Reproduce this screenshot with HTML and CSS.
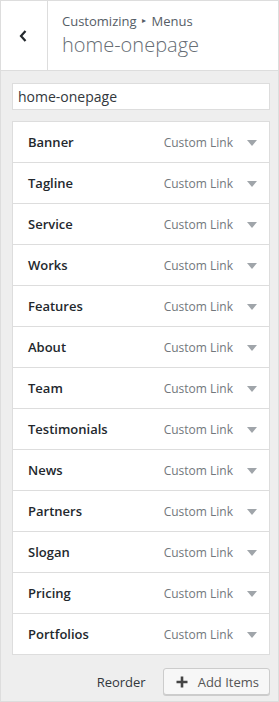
FILE: index.html
```html
<!DOCTYPE html>
<html lang="en">
<head>
  <meta charset="UTF-8">
  <title>Menus</title>
  <link rel="stylesheet" href="styles.css">
</head>
<body>
  <div class="panel">
    <!-- Header -->
    <div class="panel-head">
      <button class="back-btn" aria-label="Back">
        <svg width="10" height="14" viewBox="0 0 10 14"><path d="M7.5 2 L3 7 L7.5 12" fill="none" stroke="#23282d" stroke-width="2.2"/></svg>
      </button>
      <div class="head-title">
        <div class="crumb">Customizing<span class="sep">&#9656;</span>Menus</div>
        <div class="menu-name">home-onepage</div>
      </div>
    </div>

    <div class="panel-body">
      <input class="name-input" type="text" value="home-onepage">

      <ul class="menu-list">
        <li class="menu-item"><span class="item-title">Banner</span><span class="item-type">Custom Link</span><span class="arrow"></span></li>
        <li class="menu-item"><span class="item-title">Tagline</span><span class="item-type">Custom Link</span><span class="arrow"></span></li>
        <li class="menu-item"><span class="item-title">Service</span><span class="item-type">Custom Link</span><span class="arrow"></span></li>
        <li class="menu-item"><span class="item-title">Works</span><span class="item-type">Custom Link</span><span class="arrow"></span></li>
        <li class="menu-item"><span class="item-title">Features</span><span class="item-type">Custom Link</span><span class="arrow"></span></li>
        <li class="menu-item"><span class="item-title">About</span><span class="item-type">Custom Link</span><span class="arrow"></span></li>
        <li class="menu-item"><span class="item-title">Team</span><span class="item-type">Custom Link</span><span class="arrow"></span></li>
        <li class="menu-item"><span class="item-title">Testimonials</span><span class="item-type">Custom Link</span><span class="arrow"></span></li>
        <li class="menu-item"><span class="item-title">News</span><span class="item-type">Custom Link</span><span class="arrow"></span></li>
        <li class="menu-item"><span class="item-title">Partners</span><span class="item-type">Custom Link</span><span class="arrow"></span></li>
        <li class="menu-item"><span class="item-title">Slogan</span><span class="item-type">Custom Link</span><span class="arrow"></span></li>
        <li class="menu-item"><span class="item-title">Pricing</span><span class="item-type">Custom Link</span><span class="arrow"></span></li>
        <li class="menu-item"><span class="item-title">Portfolios</span><span class="item-type">Custom Link</span><span class="arrow"></span></li>
      </ul>

      <div class="actions">
        <span class="reorder">Reorder</span>
        <button class="add-btn">
          <svg width="12" height="12" viewBox="0 0 12 12"><path d="M6 0.5 V11.5 M0.5 6 H11.5" stroke="#444" stroke-width="2.6"/></svg>
          Add Items
        </button>
      </div>
    </div>
  </div>
</body>
</html>
```

FILE: styles.css
```css
/* Base styles */
*, ::before, ::after {
  box-sizing: border-box;
  margin: 0;
  padding: 0;
}
body {
  background-color: #eeeeee;
  color: #555d66;
  font-family: 'Open Sans', 'Noto Sans', sans-serif;
  -webkit-font-smoothing: antialiased;
}
/* Panel */
.panel {
  width: 279px;
  height: 702px;
  border: 1px solid #dddddd;
  background-color: #eeeeee;
}
.panel-head {
  display: flex;
  height: 70px;
  background-color: #ffffff;
  border-bottom: 1px solid #dddddd;
}
.back-btn {
  width: 47px;
  flex-shrink: 0;
  display: flex;
  align-items: center;
  justify-content: center;
  background: #ffffff;
  border: none;
  border-right: 1px solid #dddddd;
  padding-right: 2px;
}
.head-title {
  padding: 10px 0 0 14px;
}
.crumb {
  font-size: 13px;
  line-height: 18px;
  color: #555d66;
}
.crumb .sep {
  display: inline-block;
  font-size: 8px;
  margin: 0 6px 0 5px;
  vertical-align: 3px;
}
.menu-name {
  font-size: 20px;
  font-weight: 300;
  line-height: 28px;
  color: #666d74;
  margin-top: 1px;
}
/* Body */
.panel-body {
  padding: 12px 7px 0 11px;
}
.name-input {
  display: block;
  width: 258px;
  height: 27px;
  border: 1px solid #dddddd;
  background-color: #ffffff;
  padding: 0 5px;
  font-family: 'Open Sans', 'Noto Sans', sans-serif;
  font-size: 14px;
  color: #32373c;
  outline: none;
}
.menu-list {
  list-style: none;
  margin-top: 11px;
  width: 258px;
  border: 1px solid #dddddd;
  border-bottom: none;
  background-color: #ffffff;
}
.menu-item {
  display: flex;
  align-items: center;
  height: 41px;
  border-bottom: 1px solid #dddddd;
  padding: 0 12px 0 15px;
}
.item-title {
  flex: 1;
  font-size: 13px;
  font-weight: 600;
  color: #23282d;
}
.item-type {
  font-size: 12px;
  color: #72777c;
  margin-right: 14px;
}
.arrow {
  width: 0;
  height: 0;
  border-left: 5px solid transparent;
  border-right: 5px solid transparent;
  border-top: 6px solid #a0a5aa;
  margin-top: 1px;
}
/* Actions */
.actions {
  display: flex;
  align-items: center;
  justify-content: flex-end;
  gap: 17px;
  margin-top: 13px;
  width: 258px;
}
.reorder {
  font-size: 13px;
  color: #32373c;
}
.add-btn {
  display: flex;
  align-items: center;
  gap: 10px;
  height: 27px;
  padding: 0 10px 0 12px;
  border: 1px solid #cccccc;
  border-radius: 3px;
  background-color: #f7f7f7;
  box-shadow: 0 1px 0 #cccccc;
  font-family: 'Open Sans', 'Noto Sans', sans-serif;
  font-size: 13px;
  color: #555555;
}
```
